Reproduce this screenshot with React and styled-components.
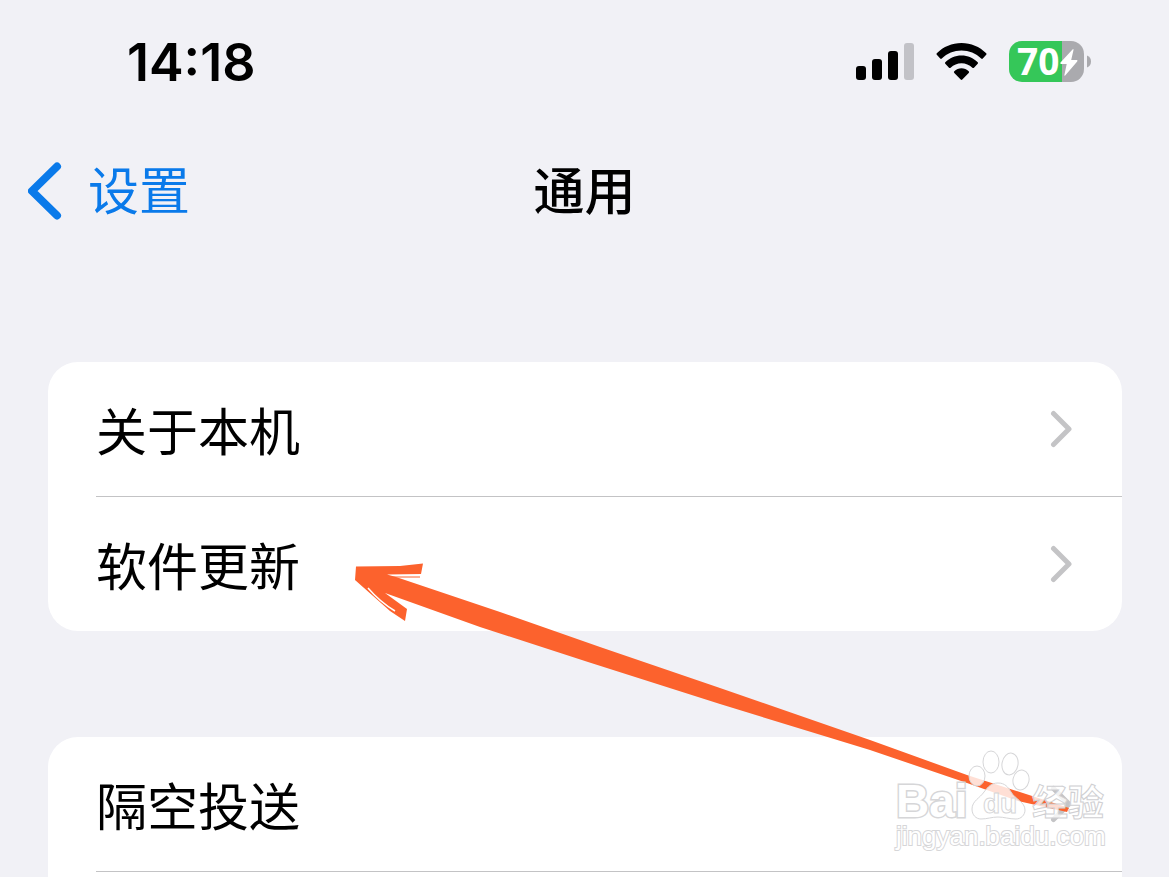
import styled, { createGlobalStyle } from "styled-components";

const GlobalStyle = createGlobalStyle`
*{
    box-sizing: border-box;
}
body{
    margin: 0;
    background-color: #f1f1f6;
    color: #000;
    font-family: "Inter", "Noto Sans CJK SC", sans-serif;
}
`

const groups = [
    ["关于本机", "软件更新"],
    ["隔空投送"],
]

const SignalIcon = () => {
    return (
        <svg width="58" height="38" viewBox="0 0 58 38" aria-hidden="true">
            <rect x="0" y="23" width="10" height="14" rx="3" />
            <rect x="16" y="16" width="10" height="21" rx="3" />
            <rect x="32" y="8" width="10" height="29" rx="3" />
            <rect x="48" y="0" width="10" height="37" rx="3" fill="#c2c2c7" />
        </svg>
    )
}

const WifiIcon = () => {
    return (
        <svg width="51" height="38" viewBox="0 0 51 38" aria-hidden="true">
            <path d="M.8 10.200C7.500 3.700 16 0 25.500 0s18 3.700 24.700 10.200q.8.800 0 1.600l-3.400 3.700q-.8.800-1.600 0C39.900 10.400 33 7.500 25.500 7.500S11.100 10.400 5.800 15.500q-.8.800-1.600 0L.8 11.800q-.8-.8 0-1.600z" />
            <path d="M9.300 19.200c4.300-4.200 9.900-6.700 16.200-6.700s11.900 2.500 16.200 6.700q.8.800 0 1.600l-3.700 3.900q-.8.800-1.600 0c-3.100-2.800-6.800-4.400-10.900-4.400s-7.800 1.600-10.900 4.400q-.8.800-1.600 0l-3.700-3.900q-.8-.8 0-1.600z" />
            <path d="M18.300 28.200c1.900-1.900 4.500-2.900 7.200-2.900s5.300 1 7.200 2.900q.9.800 0 1.700l-6.400 6.600q-.8.800-1.600 0l-6.400-6.600q-.9-.9 0-1.700z" />
        </svg>
    )
}

const BatteryIcon = () => {
    return (
        <svg width="82" height="54" viewBox="0 -6 82 54" role="img" aria-label="70">
            <path d="M53 0h9a13 13 0 0 1 13 13v15a13 13 0 0 1-13 13h-9z" fill="#aaaaae" />
            <path d="M13 0h40v41H13A13 13 0 0 1 0 28V13A13 13 0 0 1 13 0z" fill="#35c759" />
            <path d="M78 14.500c2.700.8 4 3.300 4 6s-1.300 5.200-4 6z" fill="#aaaaae" />
            <BatteryText x="8" y="34">70</BatteryText>
            <path d="M63.500 8.500 51.500 21.500q-.8 1.400.6 1.400h5.600l-2.300 11q-.1 1.300.8.500l12-14q.8-1.400-.4-1.400h-5.600l2.300-10q.1-1.400-1-.6z" fill="#fff" />
        </svg>
    )
}

const Chevron = () => {
    return (
        <svg width="22" height="38" viewBox="0 0 22 38" aria-hidden="true">
            <path d="M3.500 3.500 19 19 3.500 34.500" fill="none" stroke="#c4c4c6" strokeWidth="5" strokeLinecap="round" strokeLinejoin="round" />
        </svg>
    )
}

const Watermark = () => {
    return (
        <WatermarkMark width="220" height="110" viewBox="0 0 220 110">
            <ellipse cx="87" cy="31" rx="8" ry="10" />
            <ellipse cx="101" cy="17" rx="8" ry="11" />
            <ellipse cx="120" cy="19" rx="8" ry="11" transform="rotate(10 120 19)" />
            <ellipse cx="131" cy="35" rx="8" ry="10" transform="rotate(12 131 35)" />
            <path d="M108 38c7 0 10 4 13 9 4 7 14 10 14 18 0 5-4 9-9 9-7 0-12-2-18-2s-11 2-17 2c-5 0-9-4-9-10 0-8 8-11 12-17 4-5 7-9 14-9z" />
            <WordText x="6" y="72">Bai</WordText>
            <DuText x="93" y="68">du</DuText>
            <HanText x="142" y="71">经验</HanText>
            <SiteText x="6" y="100">jingyan.baidu.com</SiteText>
        </WatermarkMark>
    )
}

const App = () => {
    return (
        <Page>
            <GlobalStyle />
            <StatusBar>
                <Time>14:18</Time>
                <StatusIcons>
                    <SignalIcon />
                    <WifiIcon />
                    <BatteryIcon />
                </StatusIcons>
            </StatusBar>
            <NavBar>
                <BackLink href="#settings">
                    <svg width="34" height="58" viewBox="0 0 34 58" aria-hidden="true">
                        <path d="M29 4.500 4 29l25 24.500" fill="none" stroke="#0a7aea" strokeWidth="8" strokeLinecap="round" strokeLinejoin="round" />
                    </svg>
                    <NavText>设置</NavText>
                </BackLink>
                <Title>通用</Title>
            </NavBar>
            <Groups>
                {groups.map((rows, index) => (
                    <Card key={index} $open={index === groups.length - 1}>
                        {rows.map((name, i) => (
                            <Item key={name} $divided={index === groups.length - 1 || i < rows.length - 1}>
                                <RowLink href={"#" + name}>
                                    <RowName>{name}</RowName>
                                    <Chevron />
                                </RowLink>
                            </Item>
                        ))}
                    </Card>
                ))}
            </Groups>
            <Arrow width="720" height="252" viewBox="352 562 720 252" aria-hidden="true">
                <path d="M356 566.500 L400 566 L423 563.500 L421 574 L387 574.500 L396 577 L500 612 L600 647 L720 688 L870 740 L967 775 L1069 808 L1067 812 L1018 801 L967 783 L870 750 L720 704 L588 662 L480 627 L385 593 L407 609 L405 621 L390 611 L355 580 Z" fill="#fc622d" />
                <path d="M391 577 420 577" stroke="#fc622d" strokeWidth="1" />
                <path d="M368 588 Q380 602 395 611" fill="none" stroke="#fff" strokeWidth="1.500" />
            </Arrow>
            <Watermark />
        </Page>
    )
}

const Page = styled.div`
position: relative;
min-height: 100vh;
display: flex;
flex-direction: column;
overflow: hidden;
`
const StatusBar = styled.header`
height: 124px;
display: flex;
justify-content: space-between;
align-items: center;
padding: 0 78px 0 127px;
`
const Time = styled.time`
padding-top: 2px;
font-size: 52px;
font-weight: 600;
line-height: 60px;
`
const StatusIcons = styled.div`
display: flex;
align-items: center;
gap: 22px;
`
const BatteryText = styled.text`
font-family: "Open Sans", sans-serif;
font-size: 37px;
font-weight: 700;
fill: #fff;
`
const NavBar = styled.nav`
height: 134px;
display: grid;
grid-template-columns: 1fr auto 1fr;
align-items: center;
padding: 0 28px;
`
const BackLink = styled.a`
display: flex;
align-items: center;
gap: 26px;
color: #0a7aea;
text-decoration: none;
`
const NavText = styled.span`
padding-top: 2px;
font-size: 51px;
line-height: 60px;
`
const Title = styled.h1`
margin: 0;
padding-top: 2px;
font-size: 51px;
font-weight: 500;
line-height: 60px;
`
const Groups = styled.main`
flex: 1;
display: flex;
flex-direction: column;
gap: 106px;
padding: 104px 47px 0 48px;
`
const Card = styled.ul`
flex: ${({ $open }) => ($open ? "1" : "none")};
margin: 0;
padding: 0 0 0 48px;
list-style: none;
background-color: #fff;
border-radius: ${({ $open }) => ($open ? "30px 30px 0 0" : "30px")};
`
const Item = styled.li`
border-bottom: ${({ $divided }) => ($divided ? "1px solid #c3c3c5" : "none")};
`
const RowLink = styled.a`
height: 134px;
display: flex;
justify-content: space-between;
align-items: center;
padding-right: 50px;
color: #000;
text-decoration: none;
`
const RowName = styled.span`
padding-top: 8px;
font-size: 51px;
line-height: 60px;
`
const Arrow = styled.svg`
position: absolute;
left: 352px;
top: 562px;
pointer-events: none;
`
const WatermarkMark = styled.svg`
position: absolute;
right: 59px;
top: 745px;
pointer-events: none;
fill: rgba(255, 255, 255, 0.8);
stroke: #d6d6d8;
stroke-width: 1px;
font-family: "Liberation Sans", "Noto Sans CJK SC", sans-serif;
`
const WordText = styled.text`
font-size: 46px;
font-weight: 700;
fill: #fff;
stroke-width: 3px;
paint-order: stroke;
`
const DuText = styled.text`
font-size: 28px;
font-weight: 700;
`
const HanText = styled.text`
font-family: "Noto Sans CJK SC", sans-serif;
font-size: 36px;
font-weight: 700;
stroke: #cfcfd2;
`
const SiteText = styled.text`
font-size: 26px;
fill: #fff;
stroke-width: 2px;
paint-order: stroke;
`
export default App;
